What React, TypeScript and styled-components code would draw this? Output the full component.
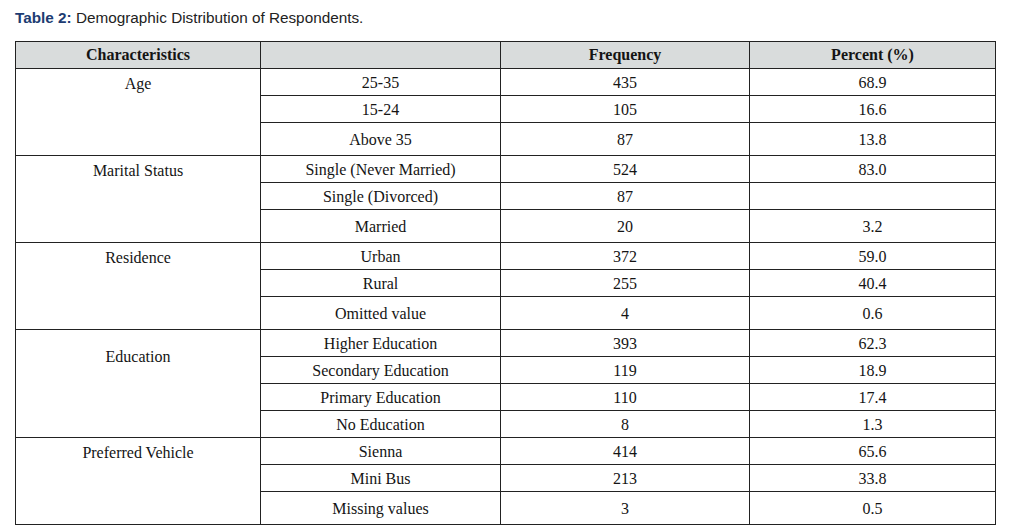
import React from "react";
import styled, { createGlobalStyle } from "styled-components";

type Row = { value: string; freq: string; pct: string; tall?: boolean };
type Group = { label: string; labelOffset?: number; rows: Row[] };

const groups: Group[] = [
  {
    label: "Age",
    rows: [
      { value: "25-35", freq: "435", pct: "68.9" },
      { value: "15-24", freq: "105", pct: "16.6" },
      { value: "Above 35", freq: "87", pct: "13.8", tall: true },
    ],
  },
  {
    label: "Marital Status",
    rows: [
      { value: "Single (Never Married)", freq: "524", pct: "83.0" },
      { value: "Single (Divorced)", freq: "87", pct: "" },
      { value: "Married", freq: "20", pct: "3.2", tall: true },
    ],
  },
  {
    label: "Residence",
    rows: [
      { value: "Urban", freq: "372", pct: "59.0" },
      { value: "Rural", freq: "255", pct: "40.4" },
      { value: "Omitted value", freq: "4", pct: "0.6", tall: true },
    ],
  },
  {
    label: "Education",
    labelOffset: 12,
    rows: [
      { value: "Higher Education", freq: "393", pct: "62.3" },
      { value: "Secondary Education", freq: "119", pct: "18.9" },
      { value: "Primary Education", freq: "110", pct: "17.4" },
      { value: "No Education", freq: "8", pct: "1.3" },
    ],
  },
  {
    label: "Preferred Vehicle",
    rows: [
      { value: "Sienna", freq: "414", pct: "65.6" },
      { value: "Mini Bus", freq: "213", pct: "33.8" },
      { value: "Missing values", freq: "3", pct: "0.5", tall: true },
    ],
  },
];

const GlobalStyle = createGlobalStyle`
  body {
    margin: 0;
    background: #ffffff;
  }
`;

const Page = styled.div`
  padding: 9px 15px 0 15px;
`;

const Caption = styled.p`
  margin: 0 0 15px 0;
  font-family: "Liberation Sans", Arial, sans-serif;
  font-size: 15.3px;
  line-height: 17px;
  color: #222222;
`;

const CaptionLabel = styled.span`
  font-weight: 700;
  color: #1d3c72;
`;

const Table = styled.table`
  width: 980px;
  table-layout: fixed;
  border-collapse: collapse;
  font-family: "Liberation Serif", "Times New Roman", serif;
  font-size: 16px;
  line-height: 18px;
  color: #141414;
`;

const HeadCell = styled.th`
  height: 26px;
  padding: 0;
  background: #d9dcdc;
  border: 1px solid #222222;
  font-weight: 700;
  text-align: center;
  vertical-align: middle;
`;

const Cell = styled.td<{ $tall?: boolean }>`
  height: ${({ $tall }) => ($tall ? 30 : 24)}px;
  padding: 2px 0 0 0;
  border: 1px solid #222222;
  text-align: center;
  vertical-align: middle;
`;

const LabelCell = styled.td<{ $offset: number }>`
  padding: ${({ $offset }) => $offset + 6}px 0 0 0;
  border: 1px solid #222222;
  text-align: center;
  vertical-align: top;
`;

export default function App(): JSX.Element {
  return (
    <Page>
      <GlobalStyle />
      <Caption>
        <CaptionLabel>Table 2:</CaptionLabel> Demographic Distribution of
        Respondents.
      </Caption>
      <Table>
        <colgroup>
          <col style={{ width: 245 }} />
          <col style={{ width: 240 }} />
          <col style={{ width: 249 }} />
          <col style={{ width: 246 }} />
        </colgroup>
        <thead>
          <tr>
            <HeadCell>Characteristics</HeadCell>
            <HeadCell />
            <HeadCell>Frequency</HeadCell>
            <HeadCell>Percent (%)</HeadCell>
          </tr>
        </thead>
        <tbody>
          {groups.map((group) =>
            group.rows.map((row, i) => (
              <tr key={group.label + row.value}>
                {i === 0 && (
                  <LabelCell
                    rowSpan={group.rows.length}
                    $offset={group.labelOffset ?? 0}
                  >
                    {group.label}
                  </LabelCell>
                )}
                <Cell $tall={row.tall}>{row.value}</Cell>
                <Cell $tall={row.tall}>{row.freq}</Cell>
                <Cell $tall={row.tall}>{row.pct}</Cell>
              </tr>
            ))
          )}
        </tbody>
      </Table>
    </Page>
  );
}
